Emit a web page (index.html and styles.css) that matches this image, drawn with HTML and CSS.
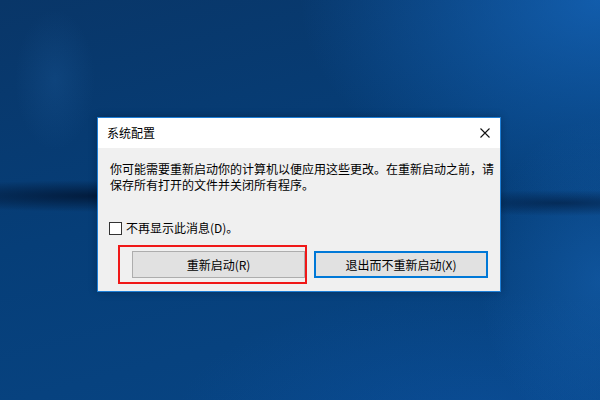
FILE: index.html
```html
<!DOCTYPE html>
<html lang="zh-CN">
<head>
<meta charset="utf-8">
<title>系统配置</title>
<link rel="stylesheet" href="styles.css">
</head>
<body>
<div class="desktop">
  <div class="dialog">
    <div class="titlebar">
      <span class="title">系统配置</span>
      <span class="close">
        <svg width="10" height="10" viewBox="0 0 10 10"><path d="M0.5 0.5 L9.5 9.5 M9.5 0.5 L0.5 9.5" stroke="#111" stroke-width="1.1" fill="none"/></svg>
      </span>
    </div>
    <div class="content">
      <p class="message">你可能需要重新启动你的计算机以便应用这些更改。在重新启动之前，请<br>保存所有打开的文件并关闭所有程序。</p>
      <label class="check"><span class="box"></span><span>不再显示此消息(D)。</span></label>
      <div class="buttons">
        <div class="highlight-wrap">
          <button class="btn">重新启动(R)</button>
          <span class="highlight"></span>
        </div>
        <button class="btn btn-default">退出而不重新启动(X)</button>
      </div>
    </div>
  </div>
</div>
</body>
</html>
```
FILE: styles.css
```css
* { box-sizing: border-box; }
html, body { margin: 0; padding: 0; }
body {
  width: 600px;
  height: 400px;
  overflow: hidden;
  font-family: "Noto Sans CJK SC", "Noto Sans", sans-serif;
}
.desktop {
  width: 600px;
  height: 400px;
  padding: 117px 0 0 97px;
  background:
    radial-gradient(ellipse 230px 16px at 110px 196px, rgba(0, 14, 38, 0.75), rgba(0, 14, 38, 0) 100%),
    radial-gradient(ellipse 160px 13px at 560px 203px, rgba(0, 20, 50, 0.55), rgba(0, 20, 50, 0) 100%),
    radial-gradient(ellipse 40px 70px at 55px 80px, rgba(40, 110, 180, 0.2), rgba(40, 110, 180, 0) 100%),
    radial-gradient(ellipse 300px 200px at 600px 0px, rgba(25, 115, 210, 0.6), rgba(25, 115, 210, 0) 100%),
    radial-gradient(ellipse 120px 160px at 600px 280px, rgba(30, 115, 205, 0.35), rgba(30, 115, 205, 0) 100%),
    radial-gradient(ellipse 300px 140px at 470px 430px, rgba(15, 90, 180, 0.35), rgba(15, 90, 180, 0) 100%),
    linear-gradient(165deg, #093668 0%, #063e78 45%, #084686 100%);
}
.dialog {
  width: 404px;
  border: 1px solid #1f7fd6;
  background: #f0f0f0;
  box-shadow: 0 0 8px rgba(0, 0, 0, 0.25);
}
.titlebar {
  height: 30px;
  background: #ffffff;
  display: flex;
  align-items: center;
  justify-content: space-between;
  padding: 0 10px 0 9px;
}
.title {
  font-size: 12px;
  color: #000;
  line-height: 16px;
}
.close {
  display: flex;
  width: 10px;
  height: 10px;
  margin-top: -1px;
}
.content {
  padding: 13px 4px 13px 12px;
}
.message {
  margin: 0;
  font-size: 12px;
  line-height: 16px;
  color: #000;
  white-space: nowrap;
}
.check {
  display: flex;
  align-items: center;
  gap: 4px;
  margin-top: 27px;
  margin-left: -1px;
  font-size: 12px;
  line-height: 16px;
  color: #000;
}
.box {
  width: 13px;
  height: 13px;
  background: #fff;
  border: 1px solid #333;
}
.buttons {
  display: flex;
  gap: 9px;
  margin-top: 15px;
  padding-left: 22px;
}
.highlight-wrap {
  position: relative;
  display: flex;
}
.btn {
  width: 173px;
  height: 27px;
  margin: 0;
  padding: 0;
  font-family: "Noto Sans CJK SC", "Noto Sans", sans-serif;
  font-size: 12px;
  color: #000;
  background: #e1e1e1;
  border: 1px solid #adadad;
  border-radius: 0;
}
.btn-default {
  width: 174px;
  border: 2px solid #0078d7;
}
.highlight {
  position: absolute;
  left: -14px;
  right: -2px;
  top: -6px;
  bottom: -6px;
  border: 2px solid #f01818;
  pointer-events: none;
}
```
